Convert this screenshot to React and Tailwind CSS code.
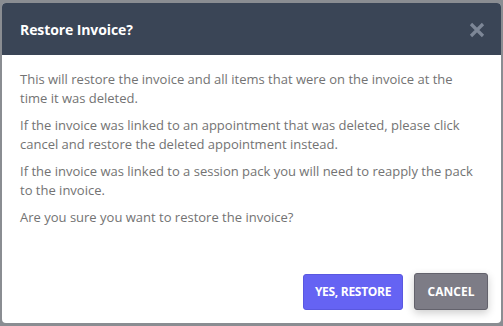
import React from "react";

export default function App() {
  return (
    <div className="w-[503px] h-[326px] bg-[#8a8d92] pt-[3px] pl-[2px]" style={{ fontFamily: '"Open Sans", sans-serif' }}>
      <div className="w-[499px] h-[320px] bg-white rounded-[4px] overflow-hidden flex flex-col">
        <div className="h-[52px] shrink-0 bg-[#3a4556] pl-[18px] pr-[16px] flex items-center justify-between">
          <h2 className="text-white font-bold text-[14px] tracking-[-0.1px]">Restore Invoice?</h2>
          <button className="w-[16px] h-[16px] mt-[1px]">
            <svg viewBox="0 0 16 16" width="16" height="16">
              <path d="M2 2 L14 14 M14 2 L2 14" stroke="#7d8797" strokeWidth="3.2" strokeLinecap="butt" />
            </svg>
          </button>
        </div>
        <div className="px-[18px] pt-[15px] text-[13px] leading-[19px] text-[#737373] flex flex-col gap-[8px]">
          <p>This will restore the invoice and all items that were on the invoice at the time it was deleted.</p>
          <p>If the invoice was linked to an appointment that was deleted, please click cancel and restore the deleted appointment instead.</p>
          <p>If the invoice was linked to a session pack you will need to reapply the pack to the invoice.</p>
          <p>Are you sure you want to restore the invoice?</p>
        </div>
        <div className="mt-auto flex justify-end items-center gap-[11px] pr-[13px] pb-[13px]">
          <button className="w-[100px] h-[36px] bg-[#6563f3] border border-[#5a58e0] rounded-[3px] text-white font-bold text-[12px] tracking-tight">YES, RESTORE</button>
          <button className="w-[74px] h-[37px] bg-[#7d7c86] border border-[#63626c] rounded-[3px] text-white font-bold text-[12px] shadow-[0_3px_8px_rgba(0,0,0,0.2)]">CANCEL</button>
        </div>
      </div>
    </div>
  );
}
